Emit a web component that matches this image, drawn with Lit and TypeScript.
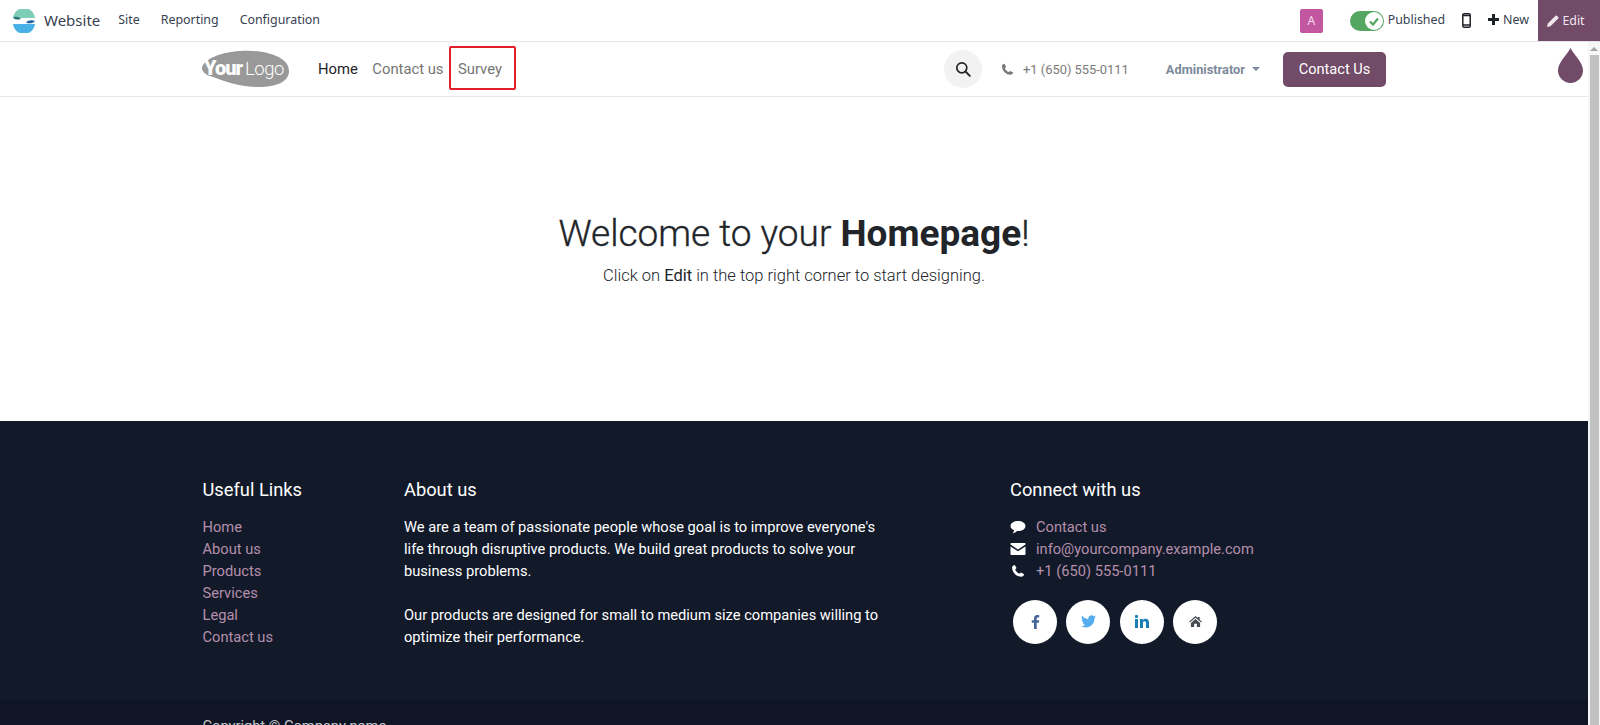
import { LitElement, html, css } from "lit";
import { customElement } from "lit/decorators.js";

const phonePath = "M4.300 1l2 3.700-1.500 1.700c.8 2 2.500 3.800 4.800 4.800l1.700-1.500 3.700 2c-.3 1.500-1.500 2.800-3 2.800C6 14.500 1.500 10 1.200 4c0-1.500 1.500-2.800 3.100-3z";

const links = ["Home", "About us", "Products", "Services", "Legal", "Contact us"];

@customElement("app-root")
export class AppRoot extends LitElement {
  static styles = css`
    :host {
      display: block;
      height: 725px;
      overflow: hidden;
      font-family: Roboto, "Liberation Sans", sans-serif;
      background: #fff;
      color: #212529;
    }
    svg {
      display: block;
    }
    .topbar {
      height: 41px;
      display: flex;
      align-items: center;
      padding-left: 12px;
      border-bottom: 1px solid #e3e5e8;
      font-family: "Noto Sans", sans-serif;
      font-size: 12.400px;
      color: #374151;
    }
    .brand {
      display: flex;
      align-items: center;
      gap: 8px;
      font-size: 15px;
      margin-right: 18px;
    }
    .lift {
      margin-bottom: 2px;
    }
    .menu {
      display: flex;
      gap: 21px;
    }
    .tools {
      margin-left: auto;
      display: flex;
      align-items: center;
      height: 100%;
    }
    .tile {
      width: 23px;
      height: 24px;
      border-radius: 2px;
      background: #c2569f;
      color: #f6dcee;
      font-size: 12px;
      display: flex;
      align-items: center;
      justify-content: center;
      margin-right: 27px;
    }
    .toggle {
      width: 34px;
      height: 20px;
      border-radius: 10px;
      background: #54a661;
      display: flex;
      justify-content: flex-end;
      align-items: center;
      padding-right: 1px;
      box-sizing: border-box;
      margin-right: 4px;
    }
    .mobile {
      margin: 0 17px 0 17px;
    }
    .new {
      display: flex;
      align-items: center;
      gap: 4px;
      margin-right: 9px;
    }
    .edit {
      width: 62px;
      height: 41px;
      background: #714b67;
      color: #f1e6ee;
      display: flex;
      align-items: center;
      justify-content: center;
      gap: 3px;
      padding-right: 6px;
      box-sizing: border-box;
    }
    .body {
      display: flex;
      height: 684px;
    }
    .page {
      flex: 1;
      min-width: 0;
      overflow: hidden;
    }
    .scrollbar {
      width: 12px;
      background: #f6f6f6;
      display: flex;
      flex-direction: column;
      align-items: center;
    }
    .arrow {
      height: 13px;
      display: flex;
      align-items: center;
    }
    .arrow::before {
      content: "";
      border: 4px solid transparent;
      border-top: 0;
      border-bottom: 4px solid #a3a3a3;
    }
    .thumb {
      flex: 1;
      align-self: stretch;
      margin: 0 1px 0 2px;
      background: #c1c1c1;
    }
    .site-header {
      height: 55px;
      box-sizing: border-box;
      border-bottom: 1px solid #e6e8eb;
      display: flex;
      align-items: center;
      padding-left: 202px;
      position: relative;
    }
    .logo {
      margin-right: 28px;
      overflow: visible;
    }
    .logo text {
      font-family: Roboto, sans-serif;
      fill: #fff;
    }
    .logo .your {
      font-size: 20px;
      font-weight: 900;
      letter-spacing: -1px;
    }
    .logo .word {
      font-size: 18.500px;
      font-weight: 300;
      letter-spacing: -0.500px;
    }
    .nav {
      display: flex;
      font-size: 14.800px;
      color: #757575;
      gap: 14.500px;
    }
    .nav .active {
      color: #1f2328;
    }
    .highlight {
      position: absolute;
      left: 449px;
      top: 4px;
      width: 67px;
      height: 44px;
      box-sizing: border-box;
      border: 2px solid #e01f2b;
      border-radius: 2px;
    }
    .right {
      margin-left: auto;
      display: flex;
      align-items: center;
      padding-right: 202px;
    }
    .search {
      width: 38px;
      height: 38px;
      border-radius: 50%;
      background: #f2f2f2;
      color: #212529;
      display: flex;
      align-items: center;
      justify-content: center;
      margin-right: 19px;
    }
    .tel {
      display: flex;
      align-items: center;
      gap: 9px;
      font-size: 12.900px;
      color: #7b7b7b;
      margin-right: 37px;
    }
    .admin {
      display: flex;
      align-items: center;
      gap: 7px;
      font-size: 12.800px;
      font-weight: 700;
      color: #7c8a9a;
      margin-right: 23px;
    }
    .caret {
      border: 4px solid transparent;
      border-top-color: #7c8a9a;
      border-bottom: 0;
    }
    .cta {
      width: 103px;
      height: 35px;
      border-radius: 5px;
      background: #714b67;
      color: #fff;
      font-size: 14.600px;
      display: flex;
      align-items: center;
      justify-content: center;
    }
    .drop {
      position: absolute;
      left: 1558px;
      top: 6px;
    }
    .hero {
      height: 324px;
      box-sizing: border-box;
      padding-top: 114px;
      text-align: center;
    }
    .hero h1 {
      margin: 0;
      font-size: 37px;
      line-height: 46px;
      font-weight: 300;
      -webkit-text-stroke: 0.35px #212529;
    }
    .hero b {
      font-weight: 700;
      -webkit-text-stroke: 0;
    }
    .hero p {
      margin: 7px 0 0;
      font-size: 16.500px;
      line-height: 24px;
      font-weight: 300;
    }
    .hero strong {
      font-weight: 400;
    }
    .footer {
      background: #121a2a;
      color: #fff;
      height: 279px;
      box-sizing: border-box;
      padding: 57px 0 0 202.500px;
      display: flex;
      font-size: 14.660px;
      line-height: 22px;
    }
    .footer h5 {
      margin: 0 0 13.500px;
      font-size: 18.300px;
      line-height: 24px;
      font-weight: 400;
    }
    .footer a {
      color: #b58fab;
      display: block;
    }
    .col-links {
      width: 201.500px;
    }
    .col-about {
      width: 606px;
    }
    .col-about p {
      margin: 0 0 22px;
      width: 480px;
    }
    .footer a.contact {
      display: flex;
      align-items: center;
      gap: 10px;
    }
    .contact svg {
      flex: none;
    }
    .socials {
      display: flex;
      gap: 9.400px;
      margin: 18px 0 0 3px;
    }
    .social {
      width: 44px;
      height: 44px;
      border-radius: 50%;
      background: #fff;
      display: flex;
      align-items: center;
      justify-content: center;
    }
    .copyright {
      background: #0f1524;
      height: 26px;
      box-sizing: border-box;
      padding: 16px 0 0 202.500px;
      color: #c4c6cb;
      font-size: 14.660px;
      line-height: 20px;
    }
  `;

  render() {
    return html`
      <div class="topbar">
        <div class="brand">
          <svg width="24" height="24" viewBox="0 0 24 24">
            <path fill="#7fcdb8" d="M1 10a11 11 0 0 1 22 0z" />
            <path fill="#4ab1e8" d="M1 14a11 11 0 0 0 22 0z" />
            <path fill="#fff" d="M0 9h24v6H0z" />
            <path fill="#2e6f73" d="M1 8.500c3-1.500 6-.500 8 1.500-3 1-6 1-8-1.500z" />
            <path fill="#1c5f9b" d="M23 12c-3-1.500-7-1-9 1.500 3 1.500 7 1 9-1.500z" />
          </svg>
          <span class="lift">Website</span>
        </div>
        <div class="menu lift"><span>Site</span><span>Reporting</span><span>Configuration</span></div>
        <div class="tools">
          <div class="tile">A</div>
          <div class="toggle">
            <svg width="18" height="18" viewBox="0 0 18 18">
              <circle cx="9" cy="9" r="9" fill="#fff" />
              <path d="M5 9.500l3 3 5-6" fill="none" stroke="#54a661" stroke-width="2.200" />
            </svg>
          </div>
          <span class="lift">Published</span>
          <svg class="mobile" width="9" height="15" viewBox="0 0 9 15">
            <rect x=".8" y=".8" width="7.400" height="13.400" rx="1.300" fill="none" stroke="#1f2328" stroke-width="1.500" />
            <path d="M1 2.500h7M1 12h7" stroke="#1f2328" stroke-width="1.500" />
          </svg>
          <div class="new lift">
            <svg width="11" height="11" viewBox="0 0 11 11"><path d="M5.500 0v11M0 5.500h11" stroke="#1f2328" stroke-width="3" /></svg>
            New
          </div>
          <div class="edit">
            <svg width="12" height="12" viewBox="0 0 12 12">
              <path fill="#f1e6ee" d="M0 12l.8-3.500L8.500.8a1 1 0 0 1 1.400 0l1.300 1.300a1 1 0 0 1 0 1.400L3.500 11.200z" />
            </svg>
            Edit
          </div>
        </div>
      </div>
      <div class="body">
        <div class="page">
          <header class="site-header">
            <svg class="logo" width="88" height="38" viewBox="0 0 88 38">
              <path fill="#999" d="M1 15C8 5 30 0 50 1c20 1 37 8 37 20 0 11-13 16-30 16C35 37 20 30 8 26 2 24-2 19 1 15z" />
              <text class="your" x="2" y="25">Your</text>
              <text class="word" x="43" y="25">Logo</text>
            </svg>
            <nav class="nav">
              <span class="active">Home</span><span>Contact us</span><span>Survey</span>
            </nav>
            <div class="highlight"></div>
            <div class="right">
              <div class="search">
                <svg width="16" height="16" viewBox="0 0 16 16">
                  <circle cx="6.800" cy="6.800" r="5" fill="none" stroke="currentColor" stroke-width="1.700" />
                  <path d="M10.500 10.500l4.300 4.300" stroke="currentColor" stroke-width="1.900" stroke-linecap="round" />
                </svg>
              </div>
              <div class="tel">
                <svg width="13" height="13" viewBox="0 0 16 16"><path fill="#7b7b7b" d=${phonePath} /></svg>
                +1 (650) 555-0111
              </div>
              <div class="admin">Administrator <span class="caret"></span></div>
              <div class="cta">Contact Us</div>
            </div>
            <svg class="drop" width="25" height="35" viewBox="0 0 25 35">
              <path fill="#714b67" d="M12.500 0C15 6 25 14 25 22.500a12.500 12.500 0 0 1-25 0C0 14 10 6 12.500 0z" />
            </svg>
          </header>
          <section class="hero">
            <h1>Welcome to your <b>Homepage</b>!</h1>
            <p>Click on <strong>Edit</strong> in the top right corner to start designing.</p>
          </section>
          <footer class="footer">
            <div class="col-links">
              <h5>Useful Links</h5>
              ${links.map((l) => html`<a>${l}</a>`)}
            </div>
            <div class="col-about">
              <h5>About us</h5>
              <p>We are a team of passionate people whose goal is to improve everyone's life through disruptive products. We build great products to solve your business problems.</p>
              <p>Our products are designed for small to medium size companies willing to optimize their performance.</p>
            </div>
            <div>
              <h5>Connect with us</h5>
              <a class="contact">
                <svg width="16" height="14" viewBox="0 0 16 14"><path fill="#fff" d="M8 1c4 0 7.500 2 7.500 5s-3.500 5-7.500 5h-1c-1 1-2.500 2-4.500 2.200 1-.8 1.500-1.700 1.600-2.900C2 9.500.500 8 .5 6 .5 3 4 1 8 1z" /></svg>
                Contact us
              </a>
              <a class="contact">
                <svg width="16" height="14" viewBox="0 0 16 14"><path fill="#fff" d="M1.500 1h13c.6 0 1 .4 1 1v.6L8 7.500.5 2.600V2c0-.6.4-1 1-1zM.5 4.400L8 9.300l7.500-4.900V12c0 .6-.4 1-1 1h-13c-.6 0-1-.4-1-1z" /></svg>
                info@yourcompany.example.com
              </a>
              <a class="contact">
                <svg width="16" height="14" viewBox="0 0 16 16"><path fill="#fff" d=${phonePath} /></svg>
                +1 (650) 555-0111
              </a>
              <div class="socials">
                <div class="social"><svg width="9" height="14" viewBox="0 0 9 15"><path fill="#46639c" d="M5.800 15V8.300h2.300l.4-2.700H5.800V4c0-.8.200-1.300 1.300-1.300h1.400V.2C8.200.2 7.400 0 6.400 0 4.300 0 2.900 1.300 2.900 3.600v2H.5v2.700h2.400V15z" /></svg></div>
                <div class="social"><svg width="15" height="13" viewBox="0 0 24 20"><path fill="#55acee" d="M24 2.400c-.9.400-1.800.7-2.800.8 1-.6 1.800-1.600 2.200-2.700-1 .6-2 1-3.100 1.200A4.900 4.900 0 0 0 11.900 6.200C7.800 6 4.200 4 1.700.9c-1.300 2.200-.7 5.100 1.500 6.600-.8 0-1.600-.2-2.200-.6 0 2.400 1.700 4.400 3.900 4.900-.7.200-1.500.2-2.200.1.600 2 2.400 3.400 4.600 3.400A9.900 9.900 0 0 1 0 17.300 14 14 0 0 0 7.500 19.500c9.100 0 14.300-7.700 14-14.600 1-.7 1.800-1.500 2.500-2.500z" /></svg></div>
                <div class="social"><svg width="14" height="13" viewBox="0 0 14 13"><rect x="0" y="4" width="3" height="9" fill="#1a7db5" /><circle cx="1.500" cy="1.500" r="1.600" fill="#1a7db5" /><path fill="#1a7db5" d="M5 4h2.800v1.300C8.300 4.400 9.300 3.800 10.600 3.800c2.400 0 3.400 1.500 3.400 4V13h-3V8.300c0-1.200-.4-2-1.500-2S8 7.200 8 8.300V13H5z" /></svg></div>
                <div class="social"><svg width="13" height="11" viewBox="0 0 14 12"><path fill="#444a50" d="M7 0l2.500 2.200V1h2v3l2.500 2.300-.8.800L7 1.800.8 7.100 0 6.300zM2 7.500L7 3.200l5 4.300V12H8.500V8.500h-3V12H2z" /></svg></div>
              </div>
            </div>
          </footer>
          <div class="copyright">Copyright © Company name</div>
        </div>
        <div class="scrollbar"><div class="arrow"></div><div class="thumb"></div></div>
      </div>
    `;
  }
}

declare global {
  interface HTMLElementTagNameMap {
    "app-root": AppRoot;
  }
}
